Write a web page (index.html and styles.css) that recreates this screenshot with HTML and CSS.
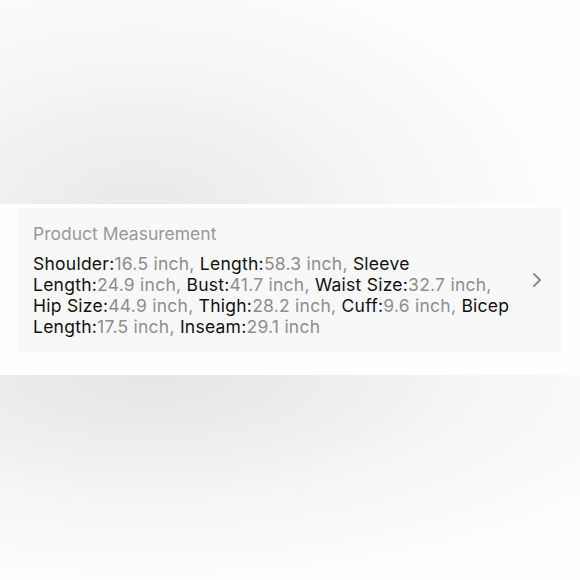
FILE: index.html
```html
<!DOCTYPE html>
<html>
<head>
<meta charset="utf-8">
<link rel="stylesheet" href="styles.css">
</head>
<body>
<div class="page">
  <div class="shade-top"></div>
  <section class="strip">
    <div class="card">
      <div class="info">
        <div class="title">Product Measurement</div>
        <p class="specs"><span class="k">Shoulder:</span><span class="v">16.5 inch, </span><span class="k">Length:</span><span class="v">58.3 inch, </span><span class="k">Sleeve Length:</span><span class="v">24.9 inch, </span><span class="k">Bust:</span><span class="v">41.7 inch, </span><span class="k">Waist Size:</span><span class="v">32.7 inch, </span><span class="k">Hip Size:</span><span class="v">44.9 inch, </span><span class="k">Thigh:</span><span class="v">28.2 inch, </span><span class="k">Cuff:</span><span class="v">9.6 inch, </span><span class="k">Bicep Length:</span><span class="v">17.5 inch, </span><span class="k">Inseam:</span><span class="v">29.1 inch</span></p>
      </div>
      <svg class="chev" width="10" height="16" viewBox="0 0 10 16"><path d="M2 2 L8 8 L2 14" fill="none" stroke="#8c8c8c" stroke-width="2" stroke-linecap="round" stroke-linejoin="round"/></svg>
    </div>
  </section>
  <div class="shade-bottom"></div>
</div>
</body>
</html>
```
FILE: styles.css
```css
html, body {
  margin: 0;
  padding: 0;
  background: #fdfdfd;
}
.page {
  width: 580px;
  height: 580px;
  display: flex;
  flex-direction: column;
  overflow: hidden;
  font-family: Inter, "Liberation Sans", sans-serif;
}
.shade-top {
  height: 204px;
  flex: none;
  background:
    radial-gradient(ellipse 420px 260px at 140px 215px, #e9e9e9 0%, #f1f1f1 40%, #f9f9f9 75%, #fdfdfd 100%);
}
.strip {
  flex: none;
  height: 171px;
  box-sizing: border-box;
  padding: 4px 18px 0;
  background: #fefefe;
}
.card {
  height: 144px;
  box-sizing: border-box;
  background: #f8f8f8;
  display: flex;
  align-items: center;
  padding: 0 20px 0 15px;
}
.info {
  flex: 1;
}
.title {
  font-size: 17.5px;
  color: #999999;
  line-height: 22px;
  margin-bottom: 8px;
}
.specs {
  margin: 0;
  width: 482px;
  font-size: 17.5px;
  line-height: 21px;
  letter-spacing: 0.25px;
}
.k { color: #111111; }
.v { color: #8e8e8e; }
.chev {
  flex: none;
  display: block;
}
.shade-bottom {
  flex: 1;
  background:
    radial-gradient(ellipse 560px 210px at 150px 0px, #e6e6e6 0%, #eeeeee 35%, #f7f7f7 65%, #fdfdfd 100%);
}
```
